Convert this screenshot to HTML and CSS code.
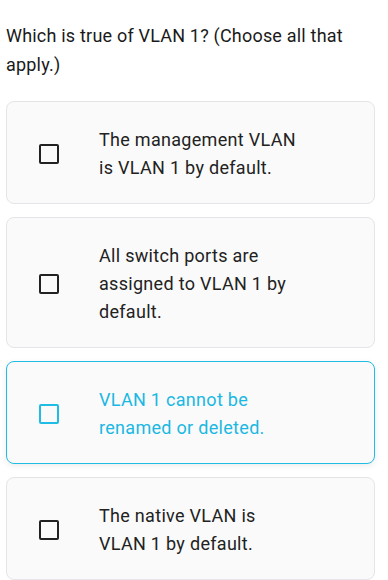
FILE: index.html
```html
<!DOCTYPE html>
<html>
<head>
<meta charset="utf-8">
<link rel="stylesheet" href="styles.css">
</head>
<body>
<main class="quiz">
  <h1 class="question">Which is true of VLAN 1? (Choose all that apply.)</h1>
  <div class="options">
    <label class="option">
      <span class="box"></span>
      <span class="text">The management VLAN<br>is VLAN 1 by default.</span>
    </label>
    <label class="option">
      <span class="box"></span>
      <span class="text">All switch ports are<br>assigned to VLAN 1 by<br>default.</span>
    </label>
    <label class="option active">
      <span class="box"></span>
      <span class="text">VLAN 1 cannot be<br>renamed or deleted.</span>
    </label>
    <label class="option">
      <span class="box"></span>
      <span class="text">The native VLAN is<br>VLAN 1 by default.</span>
    </label>
  </div>
</main>
</body>
</html>
```

FILE: styles.css
```css
html, body {
  margin: 0;
  padding: 0;
  background: #ffffff;
}
body {
  font-family: Roboto, "Noto Sans", sans-serif;
  color: #1f1f1f;
}
.quiz {
  padding: 21px 13px 0 6px;
}
.question {
  margin: 0 0 22px 0;
  font-size: 18px;
  font-weight: 400;
  line-height: 29px;
  letter-spacing: 0.2px;
  color: #1a1a1a;
}
.options {
  display: flex;
  flex-direction: column;
  gap: 13px;
}
.option {
  display: flex;
  align-items: center;
  background: #fafafa;
  border: 1px solid #e3e5e8;
  border-radius: 8px;
  padding: 24px 16px 21px 32px;
}
.box {
  flex: none;
  width: 16px;
  height: 16px;
  border: 2px solid #222222;
  border-radius: 2px;
  margin-right: 40px;
}
.text {
  font-size: 18px;
  line-height: 28px;
  letter-spacing: 0.3px;
  color: #222222;
}
.option.active {
  border-color: #1fbde4;
  box-shadow: 0 2px 6px rgba(0, 0, 0, 0.08);
}
.option.active .box {
  border-color: #1fbde4;
}
.option.active .text {
  color: #1ab8e2;
}
```
